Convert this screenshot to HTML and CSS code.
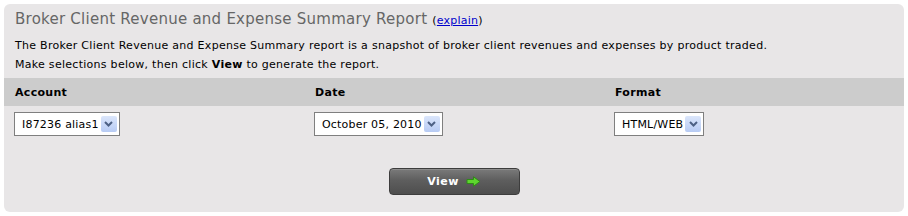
FILE: index.html
```html
<!DOCTYPE html>
<html lang="en">

<head>
    <meta charset="UTF-8">
    <title>Broker Client Revenue and Expense Summary Report</title>
    <link rel="stylesheet" href="styles.css">
</head>

<body>
    <div class="panel">
        <h1 class="report-title">Broker Client Revenue and Expense Summary Report <span class="explain">(<a href="#">explain</a>)</span></h1>
        <p class="intro">The Broker Client Revenue and Expense Summary report is a snapshot of broker client revenues and expenses by product traded.<br>
            Make selections below, then click <b>View</b> to generate the report.</p>

        <!-- selection table -->
        <div class="options">
            <div class="options-head">
                <div class="col">Account</div>
                <div class="col">Date</div>
                <div class="col">Format</div>
            </div>
            <div class="options-body">
                <div class="col">
                    <div class="fake-select">
                        <span class="value">I87236 alias1</span>
                        <span class="arrow"><svg width="9" height="6" viewBox="0 0 9 6"><path d="M1 1 L4.5 4.5 L8 1" fill="none" stroke="#4d6185" stroke-width="2"/></svg></span>
                    </div>
                </div>
                <div class="col">
                    <div class="fake-select">
                        <span class="value">October 05, 2010</span>
                        <span class="arrow"><svg width="9" height="6" viewBox="0 0 9 6"><path d="M1 1 L4.5 4.5 L8 1" fill="none" stroke="#4d6185" stroke-width="2"/></svg></span>
                    </div>
                </div>
                <div class="col">
                    <div class="fake-select">
                        <span class="value">HTML/WEB</span>
                        <span class="arrow"><svg width="9" height="6" viewBox="0 0 9 6"><path d="M1 1 L4.5 4.5 L8 1" fill="none" stroke="#4d6185" stroke-width="2"/></svg></span>
                    </div>
                </div>
            </div>
        </div>

        <div class="actions">
            <button class="view-button">View
                <svg width="15" height="11" viewBox="0 0 15 11"><path d="M1 3.5 H7.5 V0.8 L14 5.5 L7.5 10.2 V7.5 H1 Z" fill="#5ed62e" stroke="#2f8a18" stroke-width="1"/></svg>
            </button>
        </div>
    </div>
</body>

</html>
```

FILE: styles.css
```css
body {
    margin: 0;
    padding: 4px;
    background: #fff;
    font-family: "DejaVu Sans", Verdana, sans-serif;
    font-size: 11px;
    color: #000;
}

.panel {
    width: 900px;
    height: 208px;
    box-sizing: border-box;
    background: #e8e6e7;
    border-radius: 6px;
    padding-top: 4px;
}

.report-title {
    margin: 0 0 0 11px;
    font-size: 15px;
    font-weight: normal;
    color: #666;
    line-height: 22px;
    letter-spacing: 0.25px;
}

.explain {
    font-size: 11px;
    color: #000;
    letter-spacing: 0.2px;
}

.explain a {
    color: #0000cc;
}

.intro {
    margin: 4px 0 0 11px;
    line-height: 19px;
    letter-spacing: 0.28px;
}

.options {
    margin-top: 4px;
}

.options-head,
.options-body {
    display: flex;
}

.options-head {
    background: #cccccc;
    height: 28px;
    align-items: center;
    font-weight: bold;
    letter-spacing: 0.3px;
}

.col {
    width: 300px;
    padding-left: 11px;
    box-sizing: border-box;
}

.options-body .col {
    padding-left: 10px;
}

.options-body {
    padding-top: 6px;
}

.fake-select {
    display: inline-flex;
    align-items: center;
    height: 24px;
    box-sizing: border-box;
    border: 1px solid #7f7f7f;
    background: #fff;
    padding: 0 2px 0 7px;
    font-size: 11px;
    letter-spacing: 0.2px;
}

.fake-select .value {
    margin-right: 2px;
}

.fake-select .arrow {
    width: 16px;
    height: 16px;
    display: flex;
    align-items: center;
    justify-content: center;
    background: linear-gradient(#dbe6fb, #b7cbf4);
    border-radius: 2px;
}

.actions {
    display: flex;
    justify-content: center;
    padding-top: 32px;
}

.view-button {
    width: 131px;
    height: 27px;
    border: 1px solid #3d3d3d;
    border-radius: 4px;
    background: linear-gradient(#7a7a7a, #5e5e5e 45%, #4e4e4e);
    box-shadow: inset 0 1px 0 #8c8c8c;
    color: #fff;
    font-family: "DejaVu Sans", Verdana, sans-serif;
    font-size: 11px;
    font-weight: bold;
    letter-spacing: 0.5px;
    display: flex;
    align-items: center;
    justify-content: center;
    gap: 7px;
    cursor: pointer;
}
```
